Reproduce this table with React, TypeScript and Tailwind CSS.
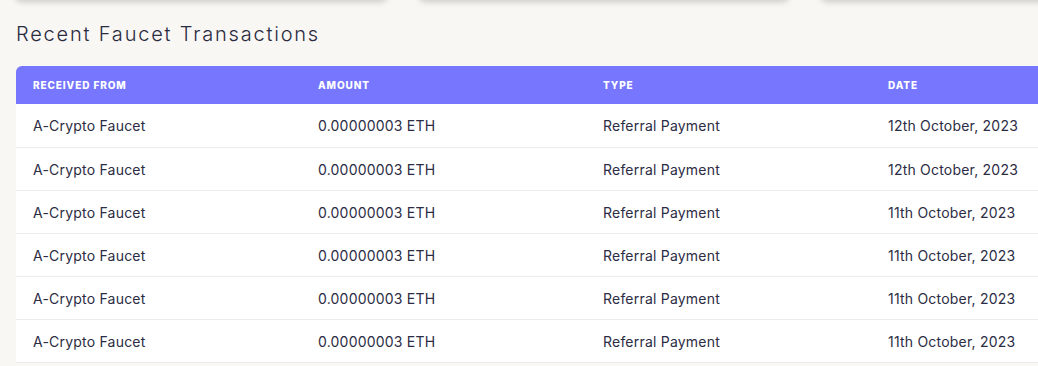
interface Transaction {
  from: string;
  amount: string;
  type: string;
  date: string;
}

const transactions: Transaction[] = [
  { from: 'A-Crypto Faucet', amount: '0.00000003 ETH', type: 'Referral Payment', date: '12th October, 2023' },
  { from: 'A-Crypto Faucet', amount: '0.00000003 ETH', type: 'Referral Payment', date: '12th October, 2023' },
  { from: 'A-Crypto Faucet', amount: '0.00000003 ETH', type: 'Referral Payment', date: '11th October, 2023' },
  { from: 'A-Crypto Faucet', amount: '0.00000003 ETH', type: 'Referral Payment', date: '11th October, 2023' },
  { from: 'A-Crypto Faucet', amount: '0.00000003 ETH', type: 'Referral Payment', date: '11th October, 2023' },
  { from: 'A-Crypto Faucet', amount: '0.00000003 ETH', type: 'Referral Payment', date: '11th October, 2023' },
];

const App = () => {
  return (
    <div className="w-[1038px] h-[366px] overflow-hidden bg-[#f8f7f3] font-['Inter',sans-serif]">
      {/* bottoms of the stat cards above */}
      <div className="flex gap-8 pl-[15px] -mt-[10px]">
        <div className="w-[372px] h-[10px] shrink-0 rounded-b-md bg-[#f8f7f3] shadow-[0_2px_6px_rgba(0,0,0,0.18)]" />
        <div className="w-[370px] h-[10px] shrink-0 rounded-b-md bg-[#f8f7f3] shadow-[0_2px_6px_rgba(0,0,0,0.18)]" />
        <div className="w-[370px] h-[10px] shrink-0 rounded-b-md bg-[#f8f7f3] shadow-[0_2px_6px_rgba(0,0,0,0.18)]" />
      </div>

      <div className="pl-4 pt-[20px]">
        <h2 className="text-[20px] leading-[28px] tracking-[0.09em] font-light text-[#2a2a40]">
          Recent Faucet Transactions
        </h2>

        <table className="mt-[18px] w-[1140px] table-fixed border-collapse">
          <thead>
            <tr className="bg-[#7676ff] h-[38px]">
              <th className="w-[285px] pl-[17px] text-left text-[10px] font-extrabold tracking-[0.09em] text-white rounded-tl-md">RECEIVED FROM</th>
              <th className="w-[285px] pl-[17px] text-left text-[10px] font-extrabold tracking-[0.09em] text-white">AMOUNT</th>
              <th className="w-[285px] pl-[17px] text-left text-[10px] font-extrabold tracking-[0.09em] text-white">TYPE</th>
              <th className="w-[285px] pl-[17px] text-left text-[10px] font-extrabold tracking-[0.09em] text-white">DATE</th>
            </tr>
          </thead>
          <tbody>
            {transactions.map((t, i) => (
              <tr key={i} className="h-[43px] bg-white border-b border-[#ececec] text-[14px] tracking-[0.015em] text-[#2c2c44]">
                <td className="pl-[17px] pt-px">{t.from}</td>
                <td className="pl-[17px] pt-px">{t.amount}</td>
                <td className="pl-[17px] pt-px">{t.type}</td>
                <td className="pl-[17px] pt-px">{t.date}</td>
              </tr>
            ))}
          </tbody>
        </table>
      </div>
    </div>
  );
};

export default App;
